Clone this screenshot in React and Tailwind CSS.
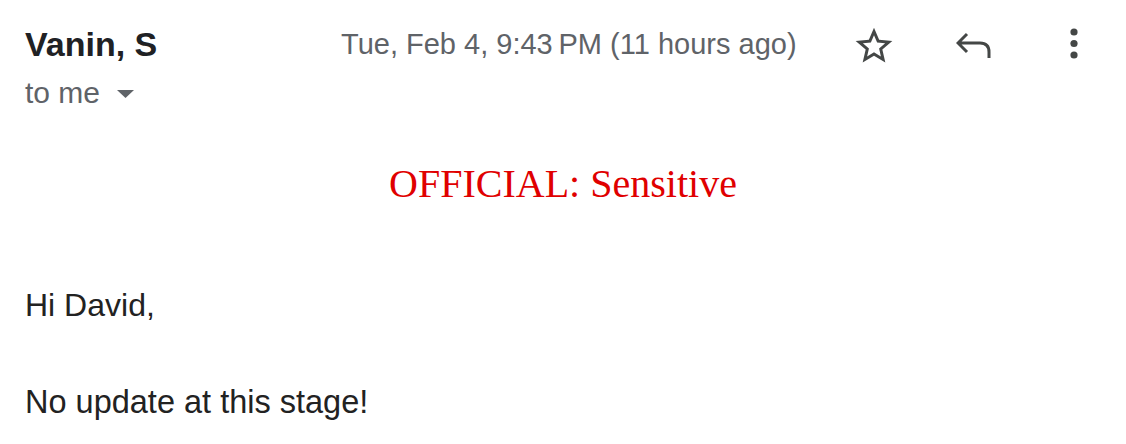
export default function App() {
    return (
        <div className="w-[1126px] h-[444px] bg-white pl-[25px] pt-[24px] font-['Liberation_Sans',Arial,sans-serif] overflow-hidden">

            {/* header row */}
            <div className="flex items-start">
                <div className="w-[316px] flex flex-col">
                    <div className="text-[34px] leading-[40px] font-bold text-[#202124]">Vanin, S</div>
                    <div className="mt-[11px] flex items-center text-[30px] leading-[36px] text-[#5f6368]">
                        <span>to me</span>
                        <svg className="ml-[17px] mt-[2px]" width="17" height="8" viewBox="0 0 17 8">
                            <path d="M0 0 H17 L8.5 8 Z" fill="#5f6368" />
                        </svg>
                    </div>
                </div>

                <div className="w-[511px] text-[29px] leading-[40px] text-[#5f6368] whitespace-nowrap">
                    Tue, Feb 4, 9:43&#8239;PM (11 hours ago)
                </div>

                <svg width="44" height="44" viewBox="0 0 24 24">
                    <path
                        fill="#444746"
                        d="M22 9.24l-7.19-.62L12 2 9.19 8.63 2 9.24l5.46 4.73L5.82 21 12 17.27 18.18 21l-1.63-7.03L22 9.24zM12 15.4l-3.76 2.27 1-4.28-3.32-2.88 4.38-.38L12 6.1l1.71 4.04 4.38.38-3.32 2.88 1 4.28L12 15.4z"
                    />
                </svg>

                <svg className="ml-[60px] mt-[8px]" width="36" height="26" viewBox="0 0 36 26">
                    <path
                        d="M11 2 L2 11 L11 20 M2 11 H24 Q33 11 33 20 V26"
                        fill="none"
                        stroke="#444746"
                        strokeWidth="3"
                        strokeLinejoin="miter"
                    />
                </svg>

                <svg className="ml-[78px] mt-[4px]" width="8" height="31" viewBox="0 0 8 31">
                    <circle cx="4" cy="4" r="3.6" fill="#444746" />
                    <circle cx="4" cy="15.5" r="3.6" fill="#444746" />
                    <circle cx="4" cy="27" r="3.6" fill="#444746" />
                </svg>
            </div>

            {/* body */}
            <div className="-ml-[25px] mt-[51px] text-center text-[40px] leading-[44px] text-[#e00000] font-['Liberation_Serif','Times_New_Roman',serif]">
                OFFICIAL: Sensitive
            </div>

            <div className="mt-[79px] text-[32px] leading-[40px] text-[#222222]">Hi David,</div>
            <div className="mt-[57px] text-[32.5px] leading-[40px] text-[#222222]">No update at this stage!</div>
        </div>
    )
}
